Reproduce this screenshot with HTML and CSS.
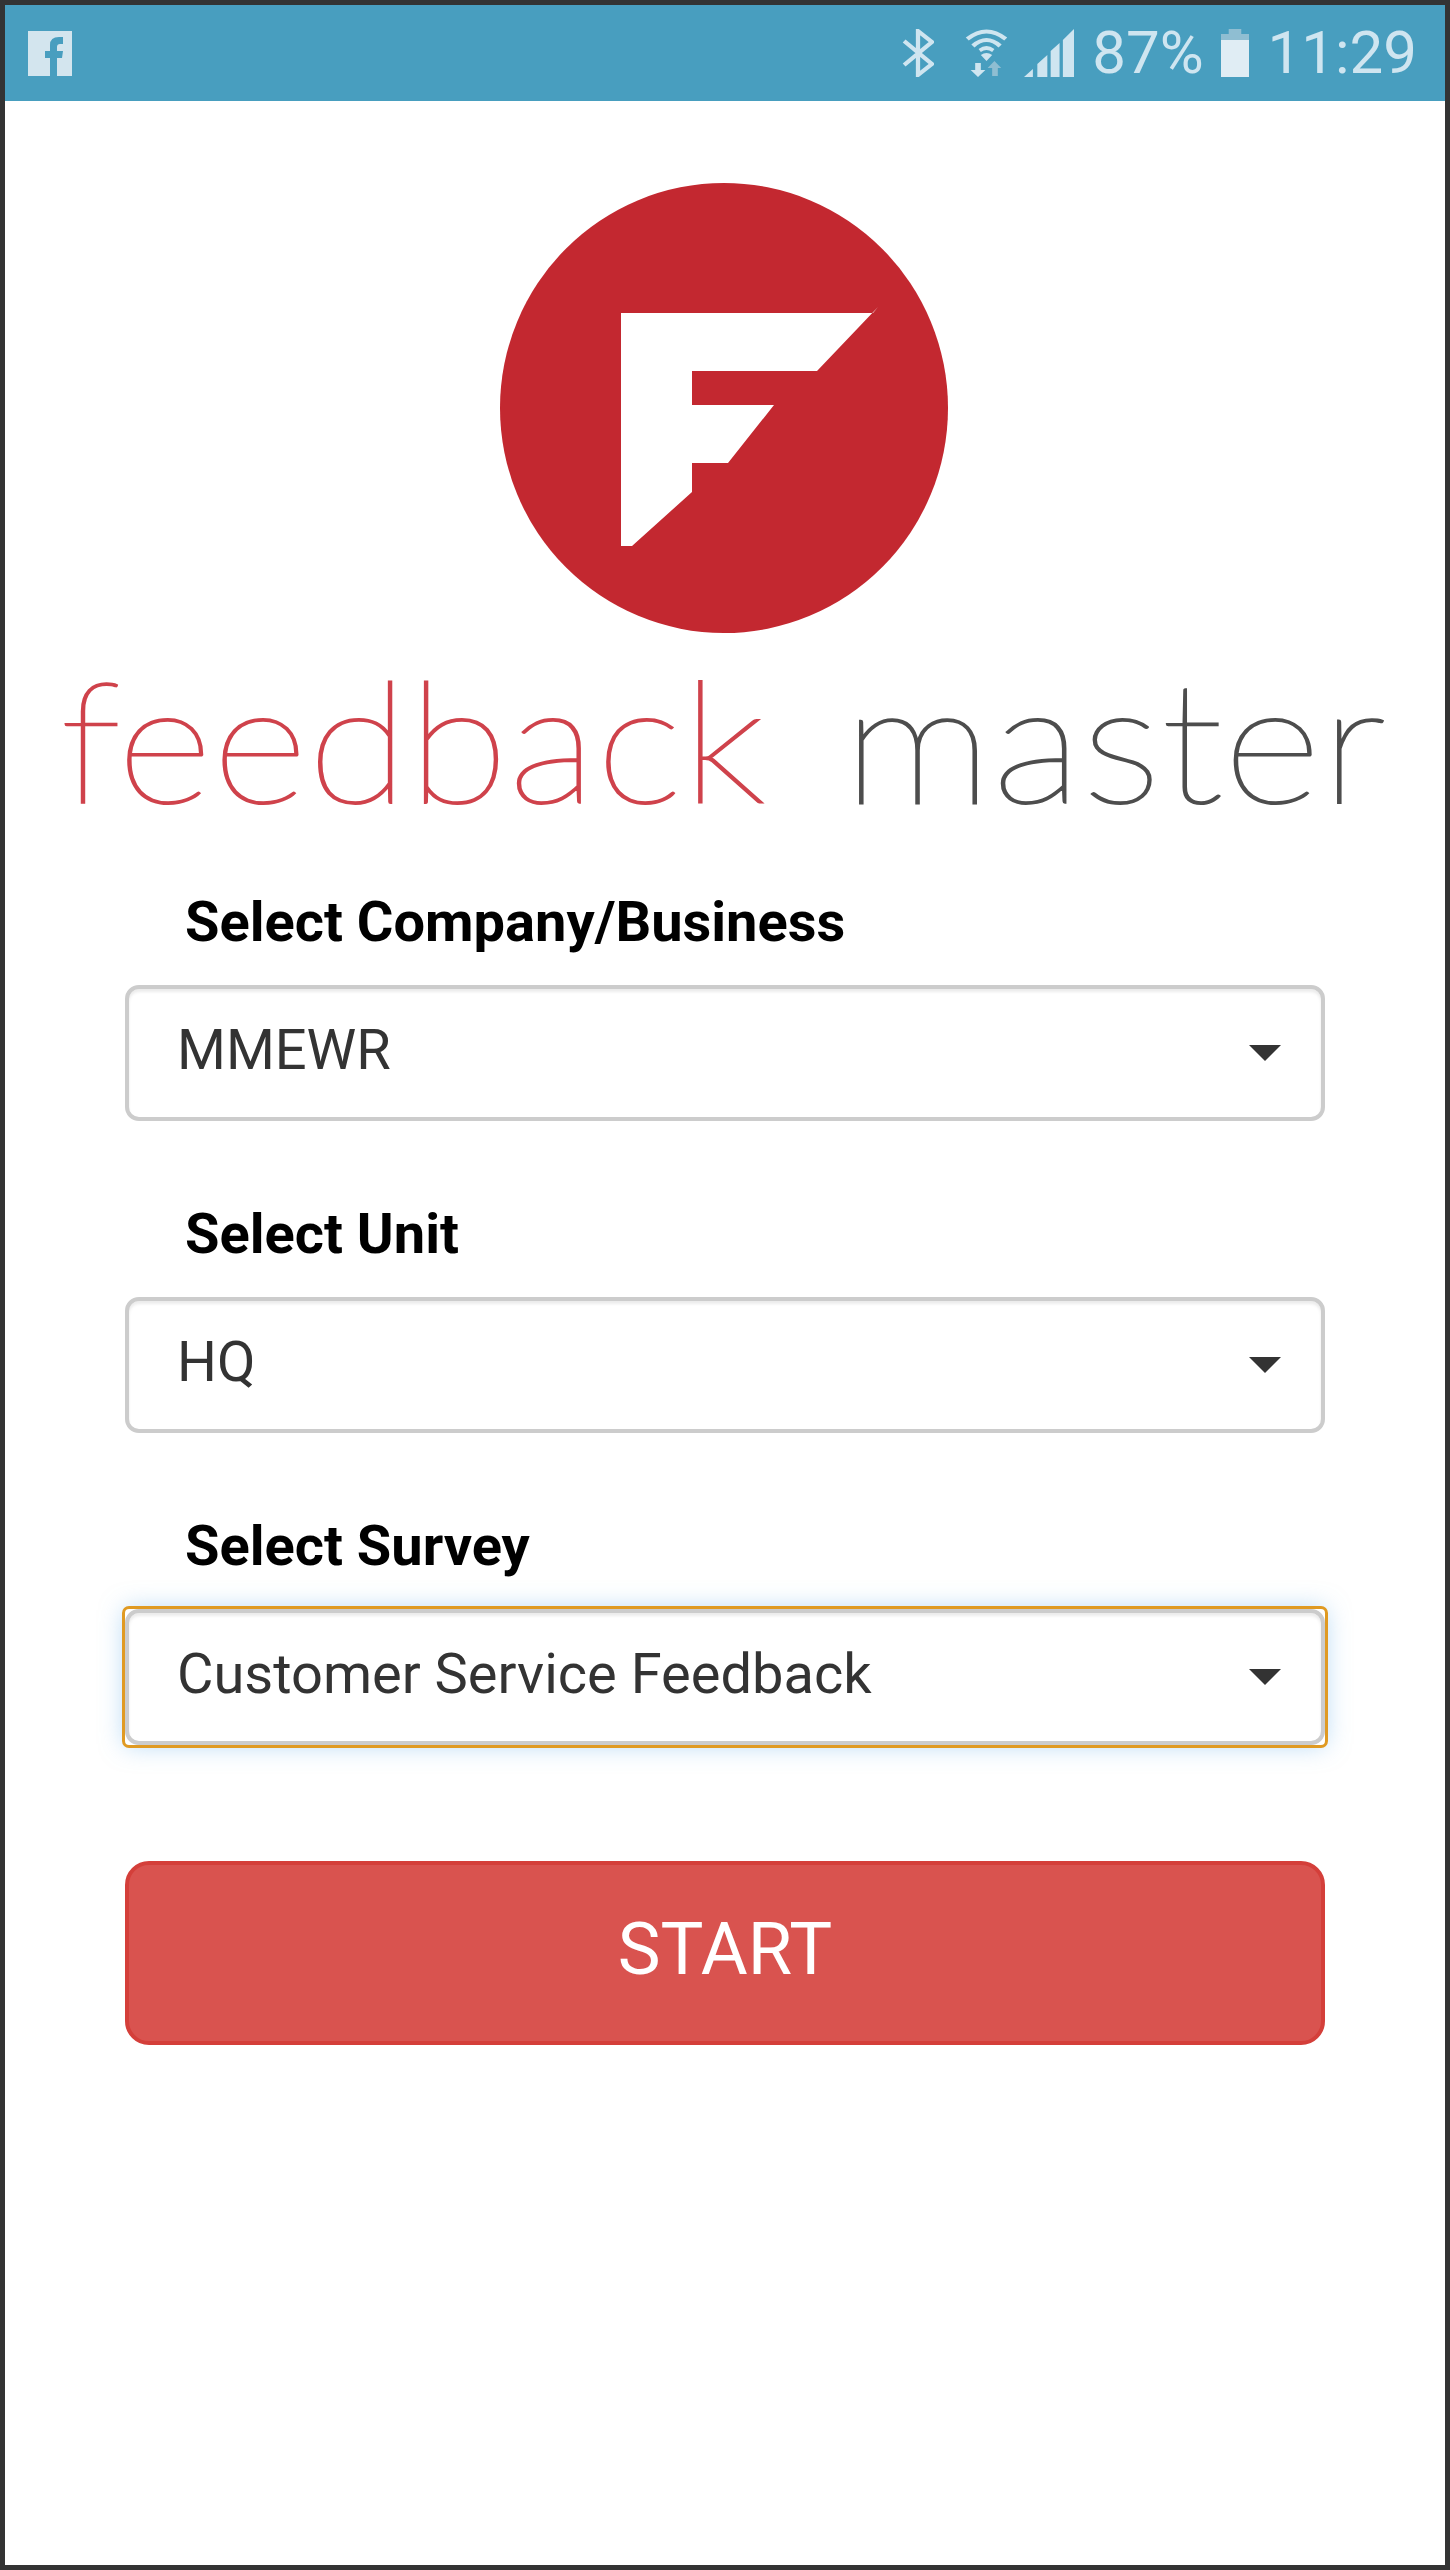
FILE: index.html
```html
<!DOCTYPE html>
<html lang="en">
<head>
    <meta charset="UTF-8">
    <meta name="viewport" content="width=device-width, initial-scale=1.0">
    <title>Feedback Master</title>
    <link rel="stylesheet" href="styles.css">
</head>
<body>
    <div class="phone">
        <div class="status-bar">
            <svg class="fb-icon" width="44" height="46" viewBox="0 0 44 46">
                <rect width="44" height="45" fill="#d3e5ee"/>
                <path d="M22 46V27H17V20H22V14Q22 6 31 6H35V13H32Q29 13 29 16V20H35L34 27H29V46Z" fill="#489ebf"/>
            </svg>
            <div class="status-right">
                <svg class="ic-bluetooth" width="32" height="48" viewBox="0 0 30 48" preserveAspectRatio="none">
                    <path d="M2 12L28 35L15 46V2L28 13L2 36" fill="none" stroke="#cfe5f0" stroke-width="4"/>
                </svg>
                <svg class="ic-wifi" width="43" height="49" viewBox="0 0 38 49" preserveAspectRatio="none">
                    <g fill="none" stroke="#cfe5f0" stroke-width="4">
                        <path d="M2 11Q19 -4 36 11"/>
                        <path d="M7 18Q19 6 31 18"/>
                    </g>
                    <path d="M12 21Q19 15 26 21L24 24Q19 20 14 24ZM14 27Q19 23 24 27L19 33Z" fill="#cfe5f0"/>
                    <path d="M9 35H14V42H18L11.500 49L5 42H9Z" fill="#cfe5f0"/>
                    <path d="M26 33L32 40H29V48H24V40H20Z" fill="#8fbed2"/>
                </svg>
                <svg class="ic-signal" width="50" height="48" viewBox="0 0 45 48" preserveAspectRatio="none">
                    <path d="M0 48L8 40V48ZM12 35L21 26V48H12ZM24 22L32 14V48H24ZM35 11L45 0V48H35Z" fill="#cfe5f0"/>
                </svg>
                <span class="battery-text">87%</span>
                <svg class="ic-battery" width="28" height="48" viewBox="0 0 29 48" preserveAspectRatio="none">
                    <path d="M8 0H21V5H29V11H0V5H8Z" fill="#8fbed2"/>
                    <rect y="11" width="29" height="37" fill="#e0edf4"/>
                </svg>
                <span class="clock">11:29</span>
            </div>
        </div>

        <div class="logo">
            <svg class="logo-mark" width="448" height="450" viewBox="0 0 448 450">
                <ellipse cx="224" cy="225" rx="224" ry="225" fill="#c32830"/>
                <path d="M121 130H373L378 124L317 188H192V222H274L228 280H192V309L132 363H121Z" fill="#fff"/>
            </svg>
            <div class="logo-text">
                <span class="logo-red">feedback</span>
                <span class="logo-dark">master</span>
            </div>
        </div>

        <form class="survey-form">
            <div class="form-group">
                <label for="company">Select Company/Business</label>
                <div class="select-wrap">
                    <select id="company"><option>MMEWR</option></select>
                    <span class="caret"></span>
                </div>
            </div>
            <div class="form-group">
                <label for="unit">Select Unit</label>
                <div class="select-wrap">
                    <select id="unit"><option>HQ</option></select>
                    <span class="caret"></span>
                </div>
            </div>
            <div class="form-group">
                <label for="survey">Select Survey</label>
                <div class="select-wrap focused">
                    <select id="survey"><option>Customer Service Feedback</option></select>
                    <span class="caret"></span>
                </div>
            </div>
            <button type="button" class="start-btn">START</button>
        </form>
    </div>
</body>
</html>
```

FILE: styles.css
```css
body {
    margin: 0;
    background: #fff;
    font-family: Roboto, "Liberation Sans", sans-serif;
}
.phone {
    box-sizing: border-box;
    width: 1450px;
    height: 2570px;
    border: 5px solid #333;
    background: #fff;
    overflow: hidden;
}
.status-bar {
    display: flex;
    justify-content: space-between;
    align-items: flex-start;
    height: 96px;
    padding: 24px 28px 0 23px;
    box-sizing: border-box;
    background: #489ebf;
    color: #cfe5f0;
}
.fb-icon {
    margin-top: 2px;
}
.status-right {
    display: flex;
    align-items: flex-start;
}
.ic-bluetooth {
    margin-right: 31px;
}
.ic-wifi {
    margin-top: -1px;
    margin-right: 16px;
}
.ic-signal {
    margin-right: 18px;
}
.battery-text,
.clock {
    font-size: 60px;
    line-height: 48px;
    font-weight: 400;
}
.ic-battery {
    margin: 0 19px 0 17px;
}

.logo {
    display: flex;
    flex-direction: column;
    align-items: center;
    padding-top: 82px;
}
.logo-mark {
    margin-right: 2px;
}
.logo-text {
    display: flex;
    justify-content: space-between;
    width: 1326px;
    margin-top: 20px;
    margin-right: 4px;
    font-family: Lato, sans-serif;
    font-weight: 100;
    font-size: 168px;
    line-height: 170px;
    -webkit-text-stroke: 2px;
}
.logo-red {
    color: #cf424b;
    transform: scaleX(1.1);
    transform-origin: left;
}
.logo-dark {
    color: #4d4d4d;
    transform: scaleX(1.127);
    transform-origin: right;
}

.survey-form {
    padding: 65px 120px 0;
}
.form-group {
    margin-bottom: 79px;
}
label {
    display: block;
    padding-left: 60px;
    margin-bottom: 29px;
    font-size: 56px;
    line-height: 68px;
    font-weight: 700;
    color: #000;
}
.select-wrap {
    position: relative;
}
.select-wrap.focused {
    border-radius: 4px;
    outline: 3px solid #e09a22;
    box-shadow: 0 0 24px rgba(102, 175, 233, 0.5);
}
select {
    display: block;
    box-sizing: border-box;
    width: 100%;
    height: 136px;
    padding: 0 48px 6px;
    border: 4px solid #ccc;
    border-radius: 14px;
    background: #fff;
    box-shadow: inset 0 3px 3px rgba(0, 0, 0, 0.08);
    font-family: Roboto, sans-serif;
    font-size: 56px;
    color: #333;
    appearance: none;
    -webkit-appearance: none;
}
.caret {
    position: absolute;
    top: 60px;
    right: 44px;
    width: 0;
    height: 0;
    border-left: 16px solid transparent;
    border-right: 16px solid transparent;
    border-top: 16px solid #333;
}
.start-btn {
    display: block;
    box-sizing: border-box;
    width: 100%;
    height: 184px;
    margin-top: 116px;
    padding: 0 0 8px;
    border: 4px solid #d43f3a;
    border-radius: 24px;
    background: #d9534f;
    color: #fff;
    font-family: Roboto, sans-serif;
    font-size: 72px;
}
```
